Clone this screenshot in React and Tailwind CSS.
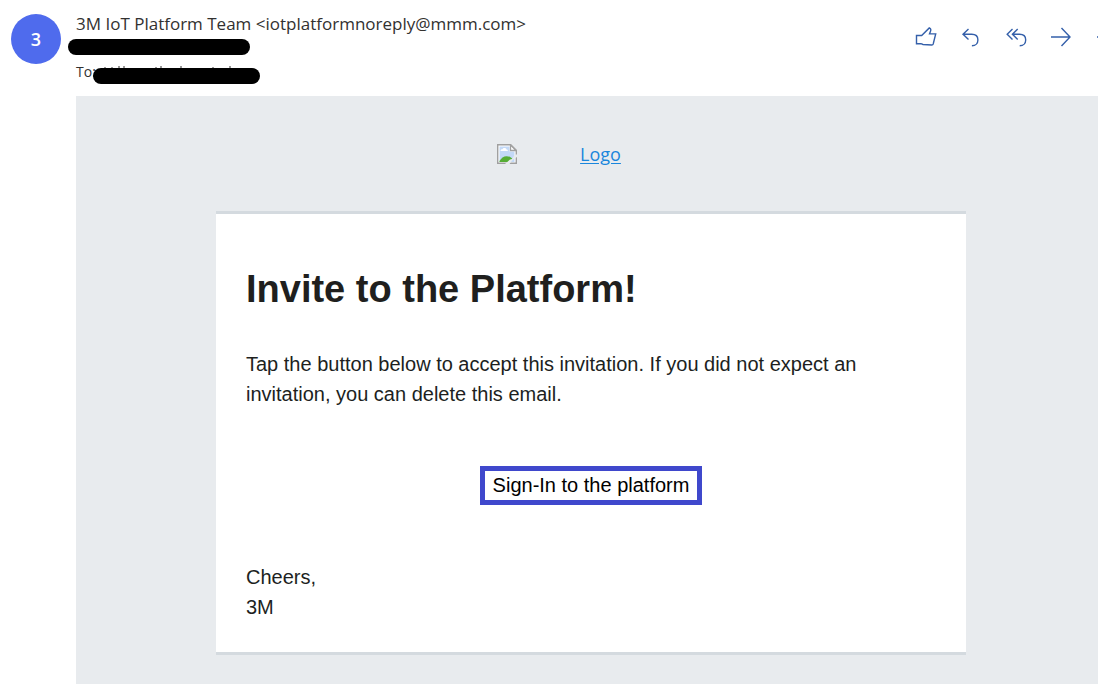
const iconProps = {
  viewBox: '0 0 24 24',
  fill: 'none',
  stroke: '#3560aa',
  strokeWidth: 1.4,
  className: 'size-6 shrink-0',
  'aria-hidden': true,
};

function LikeIcon() {
  return (
    <svg {...iconProps}>
      <path d="M2.500 10.500h5.200l7.600-7.600c1.600.6 1.800 2 1.200 3.400l-1 2.600h6.200L19.200 19c-.2.600-.7 1-1.400 1L9 19.500l-2-.8H2.500z" />
    </svg>
  );
}

function ReplyIcon() {
  return (
    <svg {...iconProps}>
      <path d="M9.500 4L4 9.200l5.500 5.200M4.200 9.200h8.500c4 0 6.200 2.500 6.200 5.700s-2.200 5.900-6 5.900" />
    </svg>
  );
}

function ReplyAllIcon() {
  return (
    <svg {...iconProps}>
      <path d="M8.500 4L3.200 9.200l5.300 5.200M13.700 4L8.400 9.200l5.300 5.200M8.600 9.200h6.900c4 0 6.200 2.500 6.200 5.700s-2.200 5.900-6 5.900" />
    </svg>
  );
}

function ForwardIcon() {
  return (
    <svg {...iconProps}>
      <path d="M2 12h19M12.500 3L21 12l-8.500 9" />
    </svg>
  );
}

function MoreIcon() {
  return (
    <svg {...iconProps}>
      <path d="M3 12h2M11 12h2M19 12h2" />
    </svg>
  );
}

function BrokenImageIcon() {
  return (
    <svg viewBox="0 0 20 20" className="size-5 shrink-0" role="img" aria-label="Image unavailable">
      <path d="M.7.7h13L19.300 6.300V19.300H.7z" fill="#fff" stroke="#a0a0a0" strokeWidth="1.400" />
      <path d="M2.500 2.500h10v5h5v10.500h-15z" fill="#c3d9f7" />
      <path d="M3.500 7c0-1.500 1-2 2-1.800C6 3.600 9 3.600 9.500 5.500c1 0 1.500.7 1.300 1.500z" fill="#fff" />
      <path d="M2.500 18v-1c2-3 4-4.800 7-4.800 2.500 0 4.500 1 6 2.800l-2 3z" fill="#56ad35" />
      <path d="M13.500 1v5.500h5.500z" fill="#fff" stroke="#a0a0a0" strokeWidth="1.300" />
      <path d="M8 20l5-4.500 2-.5 3-4.500h2V13l-4 2.500-3.500 4.500z" fill="#e8ebee" />
    </svg>
  );
}

const actions = [
  ['Like', LikeIcon],
  ['Reply', ReplyIcon],
  ['Reply all', ReplyAllIcon],
  ['Forward', ForwardIcon],
  ['More actions', MoreIcon],
];

export default function App() {
  return (
    <div className="flex min-h-screen flex-col overflow-hidden bg-white font-['Open_Sans','Noto_Sans',sans-serif] text-[#323130]">
      <header className="flex h-24 items-start">
        <div className="mt-3.5 ml-[11px] flex size-[50px] shrink-0 items-center justify-center rounded-full bg-[#4f6bed] text-lg font-semibold text-white">
          3
        </div>
        <div className="relative ml-[15px] min-w-0 flex-1 pt-3">
          <p className="text-[17px] leading-6 whitespace-nowrap">
            3M IoT Platform Team &lt;iotplatformnoreply@mmm.com&gt;
          </p>
          <p className="mt-6 text-sm leading-6">To:</p>
          <span className="absolute top-[39px] -left-2 h-4 w-[182px] rounded-full bg-black" />
          {/* tips of the covered recipient name */}
          <svg viewBox="0 0 140 4" className="absolute top-[66px] left-[27px] h-1 w-[140px]" aria-hidden="true">
            <path d="M2 1v3M9 1v3M16 0v4M21 0v4M53 1v3M58 0v4M78 0v4M110 1v2M127 0v4" stroke="#323130" fill="none" />
          </svg>
          <span className="absolute top-[68px] left-[17px] h-4 w-[167px] rounded-full bg-black" />
        </div>
        <div className="-mr-5 flex gap-[21px] pt-[25px]">
          {actions.map(([label, Icon]) => (
            <button key={label} type="button" aria-label={label}>
              <Icon />
            </button>
          ))}
        </div>
      </header>
      <main className="-mr-2 ml-[76px] flex flex-1 flex-col items-center bg-[#e8ebee] pb-[30px]">
        <a
          href="#logo"
          className="flex h-[115px] items-center gap-[63px] pr-16 text-lg text-[#1a86dc] underline underline-offset-2"
        >
          <BrokenImageIcon />
          Logo
        </a>
        <section className="w-full max-w-[750px] border-y-[3px] border-[#d4dadf] bg-white px-[30px] pt-[51px] pb-[30px] font-['Liberation_Sans',Arial,sans-serif] text-xl leading-[30px] text-[#201f1e]">
          <h1 className="text-[38px] leading-12 font-bold">Invite to the Platform!</h1>
          <p className="mt-9">
            Tap the button below to accept this invitation. If you did not expect an invitation, you can delete this
            email.
          </p>
          <div className="mt-[57px] flex justify-center">
            <a href="#sign-in" className="border-[5px] border-[#3f48cc] px-2 leading-[29px] text-black">
              Sign-In to the platform
            </a>
          </div>
          <p className="mt-[57px]">
            Cheers,
            <br />
            3M
          </p>
        </section>
      </main>
    </div>
  );
}
